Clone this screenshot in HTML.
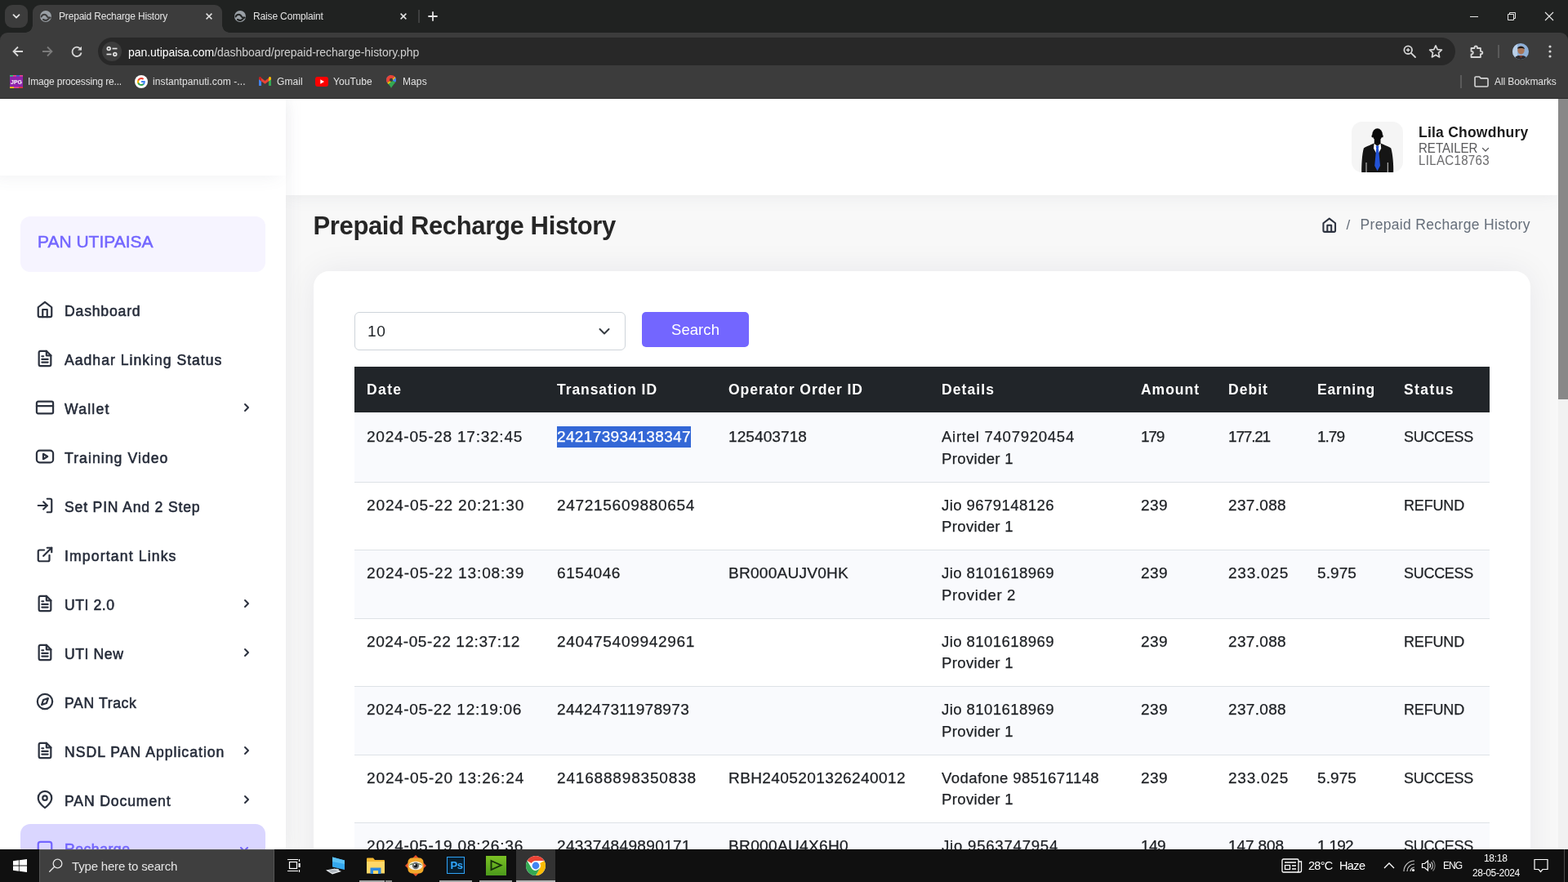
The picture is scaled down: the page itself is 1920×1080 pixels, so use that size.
<!DOCTYPE html>
<html lang="en">
<head>
<meta charset="utf-8">
<title>Prepaid Recharge History</title>
<style>
*{box-sizing:border-box;margin:0;padding:0}
html,body{width:1920px;height:1080px;overflow:hidden;background:#fff}
body{will-change:transform;font-family:"Liberation Sans",sans-serif;position:relative;color:#000}
.abs{position:absolute}
svg{display:block;overflow:visible}
.t{position:absolute;white-space:nowrap;line-height:1}

/* ---------- browser chrome ---------- */
#tabstrip{position:absolute;left:0;top:0;width:1920px;height:60px;background:#202221}
#toolbar{position:absolute;left:0;top:40px;width:1920px;height:81px;background:#3c3c3c;border-radius:9px 9px 0 0}
#tabsearch{position:absolute;left:6px;top:6px;width:28px;height:28px;border-radius:9px;background:#3c3c3c}
#tab1{position:absolute;left:40px;top:6px;width:232px;height:34px;background:#3c3c3c;border-radius:9px 9px 0 0}
#tab1:before,#tab1:after{content:"";position:absolute;bottom:0;width:9px;height:9px;background:radial-gradient(circle at 0 0,rgba(60,60,60,0) 8.5px,#3c3c3c 9px)}
#tab1:before{left:-9px}
#tab1:after{right:-9px;transform:scaleX(-1)}
.chrome-t{color:#e3e3e3;font-size:12px}
#omni{position:absolute;left:120px;top:46px;width:1662px;height:34px;border-radius:17px;background:#282828}
#siteinfo{position:absolute;left:125px;top:51px;width:24px;height:24px;border-radius:12px;background:#3c3c3c}
#pageline{position:absolute;left:0;top:120px;width:1920px;height:1px;background:#2a2a2a}

/* ---------- page ---------- */
#page{position:absolute;left:0;top:121px;width:1908px;height:919px;background:#f8f8f8;overflow:hidden}
#scroll{position:absolute;left:1908px;top:121px;width:12px;height:919px;background:#f1f1f1}
#thumb{position:absolute;left:0;top:0;width:12px;height:368px;background:#888}
#side{position:absolute;left:0;top:0;width:350px;height:919px;background:#fff;box-shadow:0 0 21px 0 rgba(89,102,122,.1)}
#logo{position:absolute;left:0;top:0;width:350px;height:94px;background:#fff;box-shadow:-9px 0 20px rgba(89,102,122,.1)}
#brand{position:absolute;left:25px;top:144px;width:300px;height:68px;border-radius:12px;background:#f6f4ff}
.mi{position:absolute;left:79px;font-size:17.6px;color:#252b39;-webkit-text-stroke-width:.55px}
.ic{position:absolute;left:44px;width:22px;height:22px;fill:none;stroke:#2c323f;stroke-width:2.4;stroke-linecap:round;stroke-linejoin:round}
.chev{position:absolute;left:293.5px;width:16px;height:16px;fill:none;stroke:#2c323f;stroke-width:3;stroke-linecap:round;stroke-linejoin:round}
#active{position:absolute;left:25px;top:888px;width:300px;height:60px;border-radius:12px;background:#dad6ff}
#head{position:absolute;left:350px;top:0;width:1558px;height:118px;background:#fff;box-shadow:0 0 20px rgba(89,102,122,.1)}
#avatar{position:absolute;left:1655px;top:28px;width:63px;height:62px;border-radius:13px;background:#f5f5f5;overflow:hidden}
#card{position:absolute;left:384px;top:211px;width:1490px;height:800px;border-radius:19px;background:#fff;box-shadow:0 0 40px rgba(8,21,66,.07)}
#sel{position:absolute;left:434px;top:261px;width:332px;height:47px;border:1px solid #ced4da;border-radius:6px;background:#fff}
#btn{position:absolute;left:786px;top:261px;width:131px;height:43px;border-radius:5px;background:#7366ff}
#thead{position:absolute;left:434px;top:328px;width:1390px;height:56px;background:#212529}
.th{position:absolute;top:348px;font-size:18.5px;font-weight:bold;color:#fff;letter-spacing:.9px;white-space:nowrap;line-height:1}
.row{position:absolute;left:434px;width:1390px;border-bottom:1px solid #dee2e6;background:#fff}
.row.odd{background:#f9fafd}
.c{position:absolute;transform:scaleX(1.06);transform-origin:0 50%;font-size:18px;color:#1c1f23;-webkit-text-stroke-width:.25px;letter-spacing:1.2px;white-space:nowrap;line-height:1}

/* ---------- taskbar ---------- */
#taskbar{position:absolute;left:0;top:1040px;width:1920px;height:40px;background:#101010}
#tsearch{position:absolute;left:48px;top:0;width:288px;height:40px;background:#3f3f3f;border:1px solid #555;border-bottom:0}
.tb-t{color:#fff;font-size:12px}
</style>
</head>
<body>

<!-- BROWSER CHROME -->
<div id="tabstrip"></div>
<div id="toolbar"></div>
<div id="tabsearch"></div>
<div id="tab1"></div>
<div id="omni"></div>
<div id="siteinfo"></div>
<!-- tab search chevron -->
<svg class="abs" style="left:14px;top:14px" width="12" height="12" viewBox="0 0 12 12"><path d="M2.5 4.2 6 7.7 9.5 4.2" fill="none" stroke="#e3e3e3" stroke-width="1.8" stroke-linecap="round" stroke-linejoin="round"/></svg>
<!-- tab 1 -->
<svg class="abs" style="left:48px;top:12px" width="16" height="16" viewBox="0 0 16 16"><circle cx="8" cy="8" r="7" fill="#9aa0a6"/><path d="M2.600 8.300c1.100-2.100 3-2.900 4.900-2.400 1.500.4 1.800 1.500 2.400 2.600.6 1 1.900 1.200 3.700 1.100M5 11.900c1.400 1 2.900 1.200 4.100.8 1.100-.4 1.800-1.100 2.500-1.700" fill="none" stroke="#3c3c3c" stroke-width="2.100" stroke-linecap="round"/></svg>
<div class="t chrome-t" style="left:72px;top:14px;letter-spacing:-.18px">Prepaid Recharge History</div>
<svg class="abs" style="left:250px;top:14px" width="12" height="12" viewBox="0 0 12 12"><path d="M2.600 2.600 9.400 9.400M9.400 2.600 2.600 9.400" stroke="#e3e3e3" stroke-width="1.500" stroke-linecap="butt"/></svg>
<!-- tab 2 -->
<svg class="abs" style="left:286px;top:12px" width="16" height="16" viewBox="0 0 16 16"><circle cx="8" cy="8" r="7" fill="#9aa0a6"/><path d="M2.600 8.300c1.100-2.100 3-2.900 4.900-2.400 1.500.4 1.800 1.500 2.400 2.600.6 1 1.900 1.200 3.700 1.100M5 11.900c1.400 1 2.900 1.200 4.100.8 1.100-.4 1.800-1.100 2.500-1.700" fill="none" stroke="#202221" stroke-width="2.100" stroke-linecap="round"/></svg>
<div class="t chrome-t" style="left:310px;top:14px;letter-spacing:-.15px">Raise Complaint</div>
<svg class="abs" style="left:488px;top:14px" width="12" height="12" viewBox="0 0 12 12"><path d="M2.600 2.600 9.400 9.400M9.400 2.600 2.600 9.400" stroke="#e3e3e3" stroke-width="1.500" stroke-linecap="butt"/></svg>
<div class="abs" style="left:512px;top:12px;width:2px;height:16px;background:#3e3f3f"></div>
<svg class="abs" style="left:524px;top:14px" width="12" height="12" viewBox="0 0 12 12"><path d="M6 1v10M1 6h10" stroke="#e3e3e3" stroke-width="1.800" stroke-linecap="round"/></svg>
<!-- window controls -->
<div class="abs" style="left:1800px;top:20px;width:10px;height:1px;background:#e8e8e8"></div>
<svg class="abs" style="left:1846px;top:15px" width="10" height="10" viewBox="0 0 10 10"><path d="M.5 2.500h7v7h-7zM2.500 2.500v-2h7v7h-2" fill="none" stroke="#e8e8e8" stroke-width="1"/></svg>
<svg class="abs" style="left:1892px;top:15px" width="10" height="10" viewBox="0 0 10 10"><path d="M0 0 10 10M10 0 0 10" stroke="#e8e8e8" stroke-width="1.1"/></svg>
<!-- nav buttons -->
<svg class="abs" style="left:14px;top:55px" width="16" height="16" viewBox="0 0 16 16"><path d="M14 8H2.800M8 2.500 2.500 8 8 13.500" fill="none" stroke="#d6d6d6" stroke-width="1.800" stroke-linejoin="miter"/></svg>
<svg class="abs" style="left:50px;top:55px" width="16" height="16" viewBox="0 0 16 16"><path d="M2 8h11.200M8 2.500 13.500 8 8 13.500" fill="none" stroke="#7b7b7b" stroke-width="1.800" stroke-linejoin="miter"/></svg>
<svg class="abs" style="left:86px;top:55px" width="16" height="16" viewBox="0 0 16 16"><path d="M13.300 6.200A5.600 5.600 0 1 0 13.600 9.500" fill="none" stroke="#d6d6d6" stroke-width="1.800"/><path d="M14 1.800v4.800H9.200z" fill="#d6d6d6"/></svg>
<!-- site info icon -->
<svg class="abs" style="left:129px;top:55px" width="16" height="16" viewBox="0 0 16 16"><g fill="none" stroke="#e3e3e3" stroke-width="1.700"><circle cx="4.200" cy="4.500" r="1.900"/><path d="M8.500 4.500h6"/><circle cx="11.800" cy="11.500" r="1.900"/><path d="M1.500 11.500h6"/></g></svg>
<div class="t" style="left:157px;top:56.600px;font-size:14px;color:#fff;letter-spacing:-.04px">pan.utipaisa.com<span style="color:#cfcfcf">/dashboard/prepaid-recharge-history.php</span></div>
<!-- zoom + star -->
<svg class="abs" style="left:1717px;top:54px" width="18" height="18" viewBox="0 0 18 18"><g fill="none" stroke="#d6d6d6" stroke-width="1.800"><circle cx="7.200" cy="7.200" r="4.800"/><path d="M10.800 10.800 16 16" stroke-linecap="round"/><path d="M5 7.200h4.400M7.200 5v4.400" stroke-width="1.400"/></g></svg>
<svg class="abs" style="left:1749px;top:54px" width="18" height="18" viewBox="0 0 18 18"><path d="M9 1.800 11.200 6.600 16.400 7.200 12.500 10.700 13.600 15.900 9 13.200 4.400 15.900 5.500 10.700 1.600 7.200 6.800 6.600z" fill="none" stroke="#d6d6d6" stroke-width="1.700" stroke-linejoin="round"/></svg>
<!-- extensions -->
<svg class="abs" style="left:1799px;top:54px" width="18" height="18" viewBox="0 0 18 18"><path d="M2.500 5h4v-.8a1.700 1.700 0 0 1 3.400 0V5h4v3.800h.7a1.700 1.700 0 0 1 0 3.400h-.7V16h-11.400v-3.600h.5a1.800 1.800 0 0 0 0-3.600h-.5z" fill="none" stroke="#d6d6d6" stroke-width="1.800" stroke-linejoin="round"/></svg>
<div class="abs" style="left:1834px;top:55px;width:2px;height:16px;background:#5a5a5a"></div>
<!-- profile avatar -->
<div class="abs" style="left:1852px;top:53px;width:20px;height:20px;border-radius:10px;overflow:hidden"><svg width="20" height="20" viewBox="0 0 20 20"><rect width="20" height="20" fill="#8fb0d8"/><rect x="0" y="0" width="6" height="20" fill="#b9cfe8"/><ellipse cx="10.500" cy="8.500" rx="4.200" ry="5" fill="#a9775a"/><path d="M6 6.500c.5-3.500 8-4 9 .5-1.500-1.200-6-1.500-9-.5z" fill="#1c1a1a"/><path d="M2 20c.5-4 4-5.500 8-5 4-.5 7.500 1 8.500 5z" fill="#2a2a2e"/><path d="M8 15l2.500 3 2.500-3" fill="#7a3b2a"/></svg></div>
<svg class="abs" style="left:1895px;top:54px" width="6" height="18" viewBox="0 0 6 18"><g fill="#d6d6d6"><circle cx="3" cy="3" r="1.600"/><circle cx="3" cy="9" r="1.600"/><circle cx="3" cy="15" r="1.600"/></g></svg>
<!-- bookmarks -->
<svg class="abs" style="left:12px;top:92px" width="16" height="16" viewBox="0 0 16 16"><rect width="16" height="16" rx="1" fill="#8e24aa"/><rect width="4" height="1.600" fill="#2ecc71"/><rect x="4" width="4" height="1.600" fill="#e84393"/><rect x="8" width="4" height="1.600" fill="#3b5bdb"/><rect x="12" width="4" height="1.600" fill="#e84393"/><rect y="14.400" width="5" height="1.600" fill="#ffd600"/><rect x="5" y="14.400" width="6" height="1.600" fill="#e84393"/><rect x="11" y="14.400" width="5" height="1.600" fill="#e53935"/><text x="8" y="11" font-family="Liberation Sans,sans-serif" font-size="7.500" font-weight="bold" fill="#fff" text-anchor="middle" textLength="14" lengthAdjust="spacingAndGlyphs">JPG</text></svg>
<div class="t chrome-t" style="left:34px;top:94px;letter-spacing:-.17px">Image processing re...</div>
<svg class="abs" style="left:165px;top:92px" width="16" height="16" viewBox="0 0 16 16"><circle cx="8" cy="8" r="8" fill="#fff"/><path d="M12.800 8.100c0-.4 0-.7-.1-1H8v2h2.700c-.1.600-.5 1.200-1 1.500v1.300h1.600c1-.9 1.500-2.200 1.500-3.800z" fill="#4285f4"/><path d="M8 13c1.400 0 2.500-.4 3.300-1.200l-1.600-1.300c-.4.300-1 .5-1.700.5-1.300 0-2.400-.9-2.800-2.100H3.500v1.300C4.300 11.900 6 13 8 13z" fill="#34a853"/><path d="M5.200 8.900c-.2-.6-.2-1.200 0-1.800V5.800H3.500c-.7 1.400-.7 3 0 4.400z" fill="#fbbc05"/><path d="M8 5c.7 0 1.400.3 1.900.7l1.400-1.400C10.500 3.500 9.300 3 8 3 6 3 4.300 4.100 3.500 5.800l1.700 1.300C5.600 5.900 6.700 5 8 5z" fill="#ea4335"/></svg>
<div class="t chrome-t" style="left:187px;top:94px;letter-spacing:.1px">instantpanuti.com -...</div>
<svg class="abs" style="left:317px;top:94px" width="15" height="12" viewBox="0 0 15 12"><path d="M0 1.500v9.500h3V5.500z" fill="#4285f4"/><path d="M12 5.500V11h3V1.500z" fill="#34a853"/><path d="M0 1.500 3 5.500 7.500 8.800 12 5.500 15 1.500 13.600.3 7.500 4.900 1.400.3z" fill="#ea4335"/><path d="M12 1.500v4l3-2.200V1.500c0-1.300-1.500-2-2.500-1.200z" fill="#fbbc05"/><path d="M3 1.500v4L0 3.300V1.500C0 .2 1.500-.5 2.500.3z" fill="#c5221f"/></svg>
<div class="t chrome-t" style="left:339px;top:94px;letter-spacing:.1px">Gmail</div>
<svg class="abs" style="left:386px;top:94px" width="16" height="12" viewBox="0 0 16 12"><rect width="16" height="12" rx="3" fill="#ff0000"/><path d="M6.300 3.300v5.400L11 6z" fill="#fff"/></svg>
<div class="t chrome-t" style="left:408px;top:94px;letter-spacing:.1px">YouTube</div>
<svg class="abs" style="left:473px;top:92px" width="12" height="16" viewBox="0 0 12 16"><path d="M6 0C2.700 0 0 2.600 0 5.900c0 1.400.5 2.600 1.300 3.700z" fill="#1a73e8"/><path d="M6 0c1.800 0 3.500.8 4.600 2.100L1.300 9.600C.5 8.500 0 7.300 0 5.900 0 2.600 2.700 0 6 0z" fill="#ea4335"/><path d="M10.600 2.100C11.500 3.100 12 4.500 12 5.900c0 1-.3 2-.7 2.900L6 5.900z" fill="#4285f4"/><path d="M1.300 9.600C2.800 11.500 5 13.500 6 16c.8-2.300 3.500-4.700 5.300-7.200L6 5.900z" fill="#34a853"/><path d="M1.300 9.600 6 5.900 10.600 2.100 6 5.900z" fill="#fbbc04"/><path d="M1.300 9.600l9.300-7.500.7 1.200-8.800 7.800z" fill="#fbbc04"/><circle cx="6" cy="5.900" r="2.100" fill="#3c3c3c"/></svg>
<div class="t chrome-t" style="left:493px;top:94px;letter-spacing:.1px">Maps</div>
<div class="abs" style="left:1788px;top:92px;width:2px;height:16px;background:#5a5a5a"></div>
<svg class="abs" style="left:1805px;top:93px" width="18" height="14" viewBox="0 0 18 14"><path d="M1 2.200a1.200 1.200 0 0 1 1.200-1.200h4.300l1.800 1.900h7.500a1.200 1.200 0 0 1 1.200 1.200v7.700a1.200 1.200 0 0 1-1.200 1.200H2.200a1.200 1.200 0 0 1-1.200-1.200z" fill="none" stroke="#d6d6d6" stroke-width="1.600"/></svg>
<div class="t chrome-t" style="left:1830px;top:94px;letter-spacing:-.08px">All Bookmarks</div>


<!-- PAGE -->
<div id="page">
<div id="head"></div>
<div id="avatar"><svg width="63" height="62" viewBox="0 0 63 62"><ellipse cx="31.600" cy="15.600" rx="6.300" ry="7.300" fill="#0b0b0b"/><ellipse cx="25.400" cy="17.800" rx=".9" ry="1.700" fill="#0b0b0b"/><ellipse cx="37.800" cy="17.800" rx=".9" ry="1.700" fill="#0b0b0b"/><path d="M27.800 20h7.700v8h-7.700z" fill="#0b0b0b"/><path d="M12.200 62c0-9 .5-22 2.700-29.500 1-1.500 8.500-4 12.500-6h8.400c4 2 11.500 4.500 12.500 6 2.200 7.500 3.200 20.500 2.900 29.500z" fill="#151515"/><path d="M27.600 26.800l4 3.200 4-3.200.6 6-4.600 8.500-4.600-8.500z" fill="#fff"/><path d="M29.600 29.400h4l-.6 3 2 21.600-3.400 6.200-3.400-6.200 2-21.600z" fill="#2353d6"/><path d="M18 50v12M44.300 50v12" stroke="#e9e9e9" stroke-width=".9"/></svg></div>
<div class="t" style="left:1737px;top:32.700px;font-size:17.5px;font-weight:bold;color:#1b1b1b;letter-spacing:0.23px">Lila Chowdhury</div>
<div class="t" style="left:1737px;top:51.900px;font-size:16.4px;color:#59595b;transform:scaleX(.92);transform-origin:0 50%;letter-spacing:-0.02px">RETAILER</div>
<svg class="abs" style="left:1813.500px;top:57.500px" width="10" height="8" viewBox="0 0 10 8"><path d="M1.500 2.500 5 6l3.500-3.500" fill="none" stroke="#59595b" stroke-width="1.200" stroke-linecap="round" stroke-linejoin="round"/></svg>
<div class="t" style="left:1737px;top:66.900px;font-size:16.4px;color:#6a6a6c;transform:scaleX(.92);transform-origin:0 50%;letter-spacing:0.34px">LILAC18763</div>
<div class="t" style="left:383.500px;top:139.800px;font-size:31px;font-weight:bold;color:#262626;letter-spacing:-0.36px">Prepaid Recharge History</div>
<svg class="abs" style="left:1618.300px;top:145.200px;fill:none;stroke:#2c323f;stroke-width:2.500;stroke-linecap:round;stroke-linejoin:round" width="19.500" height="19.500" viewBox="0 0 24 24"><path d="M3 9l9-7 9 7v11a2 2 0 0 1-2 2H5a2 2 0 0 1-2-2z"/><path d="M9 22V12h6v10"/></svg>
<div class="t" style="left:1648.500px;top:145.500px;font-size:17px;color:#656e7a">/</div>
<div class="t" style="left:1665.500px;top:145.800px;font-size:17.5px;color:#656e7a;letter-spacing:0.33px">Prepaid Recharge History</div>

<div id="card"></div>
<div id="sel"></div>
<div class="t" style="left:450px;top:275.2px;font-size:19.2px;color:#212529;letter-spacing:.5px">10</div>
<svg class="abs" style="left:732px;top:278.5px" width="16" height="12" viewBox="0 0 16 12"><path d="M2.500 3 8 8.500 13.500 3" fill="none" stroke="#343a40" stroke-width="2" stroke-linecap="round" stroke-linejoin="round"/></svg>
<div id="btn"></div>
<div class="t" style="left:822px;top:274px;font-size:18.5px;color:#fff;letter-spacing:0.06px">Search</div>
<div id="thead"></div>
<div class="th" style="left:449px;font-size:17.5px;letter-spacing:1.39px">Date</div>
<div class="th" style="left:682px;font-size:17.5px;letter-spacing:0.93px">Transation ID</div>
<div class="th" style="left:892px;font-size:17.5px;letter-spacing:0.95px">Operator Order ID</div>
<div class="th" style="left:1153px;font-size:17.5px;letter-spacing:1.09px">Details</div>
<div class="th" style="left:1397px;font-size:17.5px;letter-spacing:0.98px">Amount</div>
<div class="th" style="left:1504px;font-size:17.5px;letter-spacing:1.05px">Debit</div>
<div class="th" style="left:1613px;font-size:17.5px;letter-spacing:0.84px">Earning</div>
<div class="th" style="left:1719px;font-size:17.5px;letter-spacing:1.42px">Status</div>
<div class="row odd" style="top:384px;height:86px"></div>
<div class="c" style="left:449px;top:405.0px;letter-spacing:0.69px">2024-05-28 17:32:45</div>
<div class="abs" style="left:682px;top:401px;width:164px;height:26px;background:#3367d6"></div>
<div class="c" style="left:682px;top:405.0px;letter-spacing:0.3px;color:#fff">242173934138347</div>
<div class="c" style="left:892px;top:405.0px;letter-spacing:0.05px">125403718</div>
<div class="c" style="left:1153px;top:405.0px;letter-spacing:0.71px;transform:scaleX(1.03)">Airtel 7407920454</div>
<div class="c" style="left:1153px;top:432.0px;letter-spacing:0.34px;transform:scaleX(1.03)">Provider 1</div>
<div class="c" style="left:1397px;top:405.0px;letter-spacing:-1.21px">179</div>
<div class="c" style="left:1504px;top:405.0px;letter-spacing:-1.16px">177.21</div>
<div class="c" style="left:1613px;top:405.0px;letter-spacing:-0.98px">1.79</div>
<div class="c" style="left:1719px;top:405.0px;letter-spacing:-0.29px;transform:none">SUCCESS</div>
<div class="row" style="top:470px;height:83px"></div>
<div class="c" style="left:449px;top:489.0px;letter-spacing:0.79px">2024-05-22 20:21:30</div>
<div class="c" style="left:682px;top:489.0px;letter-spacing:0.62px">247215609880654</div>
<div class="c" style="left:1153px;top:489.0px;letter-spacing:0.42px;transform:scaleX(1.03)">Jio 9679148126</div>
<div class="c" style="left:1153px;top:515.0px;letter-spacing:0.34px;transform:scaleX(1.03)">Provider 1</div>
<div class="c" style="left:1397px;top:489.0px;letter-spacing:0.37px">239</div>
<div class="c" style="left:1504px;top:489.0px;letter-spacing:0.27px">237.088</div>
<div class="c" style="left:1719px;top:489.0px;letter-spacing:-0.17px;transform:none">REFUND</div>
<div class="row odd" style="top:553px;height:84px"></div>
<div class="c" style="left:449px;top:572.0px;letter-spacing:0.79px">2024-05-22 13:08:39</div>
<div class="c" style="left:682px;top:572.0px;letter-spacing:0.5px">6154046</div>
<div class="c" style="left:892px;top:572.0px;letter-spacing:0.22px">BR000AUJV0HK</div>
<div class="c" style="left:1153px;top:572.0px;letter-spacing:0.42px;transform:scaleX(1.03)">Jio 8101618969</div>
<div class="c" style="left:1153px;top:599.0px;letter-spacing:0.63px;transform:scaleX(1.03)">Provider 2</div>
<div class="c" style="left:1397px;top:572.0px;letter-spacing:0.37px">239</div>
<div class="c" style="left:1504px;top:572.0px;letter-spacing:0.68px">233.025</div>
<div class="c" style="left:1613px;top:572.0px;letter-spacing:0.05px">5.975</div>
<div class="c" style="left:1719px;top:572.0px;letter-spacing:-0.29px;transform:none">SUCCESS</div>
<div class="row" style="top:637px;height:83px"></div>
<div class="c" style="left:449px;top:656.0px;letter-spacing:0.54px">2024-05-22 12:37:12</div>
<div class="c" style="left:682px;top:656.0px;letter-spacing:0.62px">240475409942961</div>
<div class="c" style="left:1153px;top:656.0px;letter-spacing:0.42px;transform:scaleX(1.03)">Jio 8101618969</div>
<div class="c" style="left:1153px;top:682.0px;letter-spacing:0.34px;transform:scaleX(1.03)">Provider 1</div>
<div class="c" style="left:1397px;top:656.0px;letter-spacing:0.37px">239</div>
<div class="c" style="left:1504px;top:656.0px;letter-spacing:0.27px">237.088</div>
<div class="c" style="left:1719px;top:656.0px;letter-spacing:-0.17px;transform:none">REFUND</div>
<div class="row odd" style="top:720px;height:84px"></div>
<div class="c" style="left:449px;top:739.0px;letter-spacing:0.64px">2024-05-22 12:19:06</div>
<div class="c" style="left:682px;top:739.0px;letter-spacing:0.27px">244247311978973</div>
<div class="c" style="left:1153px;top:739.0px;letter-spacing:0.42px;transform:scaleX(1.03)">Jio 8101618969</div>
<div class="c" style="left:1153px;top:766.0px;letter-spacing:0.34px;transform:scaleX(1.03)">Provider 1</div>
<div class="c" style="left:1397px;top:739.0px;letter-spacing:0.37px">239</div>
<div class="c" style="left:1504px;top:739.0px;letter-spacing:0.27px">237.088</div>
<div class="c" style="left:1719px;top:739.0px;letter-spacing:-0.17px;transform:none">REFUND</div>
<div class="row" style="top:804px;height:83px"></div>
<div class="c" style="left:449px;top:823.0px;letter-spacing:0.79px">2024-05-20 13:26:24</div>
<div class="c" style="left:682px;top:823.0px;letter-spacing:0.74px">241688898350838</div>
<div class="c" style="left:892px;top:823.0px;letter-spacing:0.34px">RBH2405201326240012</div>
<div class="c" style="left:1153px;top:823.0px;letter-spacing:0.4px;transform:scaleX(1.03)">Vodafone 9851671148</div>
<div class="c" style="left:1153px;top:849.0px;letter-spacing:0.34px;transform:scaleX(1.03)">Provider 1</div>
<div class="c" style="left:1397px;top:823.0px;letter-spacing:0.37px">239</div>
<div class="c" style="left:1504px;top:823.0px;letter-spacing:0.68px">233.025</div>
<div class="c" style="left:1613px;top:823.0px;letter-spacing:0.05px">5.975</div>
<div class="c" style="left:1719px;top:823.0px;letter-spacing:-0.29px;transform:none">SUCCESS</div>
<div class="row odd" style="top:887px;height:84px"></div>
<div class="c" style="left:449px;top:906.0px;letter-spacing:0.74px">2024-05-19 08:26:36</div>
<div class="c" style="left:682px;top:906.0px;letter-spacing:0.3px">243374849890171</div>
<div class="c" style="left:892px;top:906.0px;letter-spacing:0.3px">BR000AU4X6H0</div>
<div class="c" style="left:1153px;top:906.0px;letter-spacing:0.77px;transform:scaleX(1.03)">Jio 9563747954</div>
<div class="c" style="left:1153px;top:933.0px;letter-spacing:0.34px;transform:scaleX(1.03)">Provider 1</div>
<div class="c" style="left:1397px;top:906.0px;letter-spacing:-0.58px">149</div>
<div class="c" style="left:1504px;top:906.0px;letter-spacing:-0.13px">147.808</div>
<div class="c" style="left:1613px;top:906.0px;letter-spacing:-0.71px">1.192</div>
<div class="c" style="left:1719px;top:906.0px;letter-spacing:-0.29px;transform:none">SUCCESS</div>

<div id="side"></div>
<div id="logo"></div>
<div id="brand"></div>
<div class="t" style="left:46px;top:164px;font-size:21px;color:#7366ff;letter-spacing:-0.01px;-webkit-text-stroke-width:.5px">PAN UTIPAISA</div>
<svg class="ic" style="top:247px" viewBox="0 0 24 24"><path d="M3 9l9-7 9 7v11a2 2 0 0 1-2 2H5a2 2 0 0 1-2-2z"/><path d="M9 22V12h6v10"/></svg>
<div class="t mi" style="top:252px;letter-spacing:0.82px">Dashboard</div>
<svg class="ic" style="top:307px" viewBox="0 0 24 24"><path d="M14 2H6a2 2 0 0 0-2 2v16a2 2 0 0 0 2 2h12a2 2 0 0 0 2-2V8z"/><path d="M14 2v6h6"/><path d="M16 13H8"/><path d="M16 17H8"/><path d="M10 9H8"/></svg>
<div class="t mi" style="top:312px;letter-spacing:1.01px">Aadhar Linking Status</div>
<svg class="ic" style="top:367px" viewBox="0 0 24 24"><rect x="1" y="4" width="22" height="16" rx="2" ry="2"/><path d="M1 10h22"/></svg>
<div class="t mi" style="top:372px;letter-spacing:1.21px">Wallet</div>
<svg class="chev" style="top:369.5px" viewBox="0 0 24 24"><path d="M9 18l6-6-6-6"/></svg>
<svg class="ic" style="top:427px" viewBox="0 0 24 24"><rect x="1" y="4" width="22" height="16" rx="4" ry="4"/><path d="M9.800 8.500v7l5.700-3.500z"/></svg>
<div class="t mi" style="top:432px;letter-spacing:1.07px">Training Video</div>
<svg class="ic" style="top:487px" viewBox="0 0 24 24"><path d="M15 3h4a2 2 0 0 1 2 2v14a2 2 0 0 1-2 2h-4"/><path d="M10 17l5-5-5-5"/><path d="M15 12H3"/></svg>
<div class="t mi" style="top:492px;letter-spacing:0.82px">Set PIN And 2 Step</div>
<svg class="ic" style="top:547px" viewBox="0 0 24 24"><path d="M18 13v6a2 2 0 0 1-2 2H5a2 2 0 0 1-2-2V8a2 2 0 0 1 2-2h6"/><path d="M15 3h6v6"/><path d="M10 14L21 3"/></svg>
<div class="t mi" style="top:552px;letter-spacing:1.15px">Important Links</div>
<svg class="ic" style="top:607px" viewBox="0 0 24 24"><path d="M14 2H6a2 2 0 0 0-2 2v16a2 2 0 0 0 2 2h12a2 2 0 0 0 2-2V8z"/><path d="M14 2v6h6"/><path d="M16 13H8"/><path d="M16 17H8"/><path d="M10 9H8"/></svg>
<div class="t mi" style="top:612px;letter-spacing:0.54px">UTI 2.0</div>
<svg class="chev" style="top:609.5px" viewBox="0 0 24 24"><path d="M9 18l6-6-6-6"/></svg>
<svg class="ic" style="top:667px" viewBox="0 0 24 24"><path d="M14 2H6a2 2 0 0 0-2 2v16a2 2 0 0 0 2 2h12a2 2 0 0 0 2-2V8z"/><path d="M14 2v6h6"/><path d="M16 13H8"/><path d="M16 17H8"/><path d="M10 9H8"/></svg>
<div class="t mi" style="top:672px;letter-spacing:0.58px">UTI New</div>
<svg class="chev" style="top:669.5px" viewBox="0 0 24 24"><path d="M9 18l6-6-6-6"/></svg>
<svg class="ic" style="top:727px" viewBox="0 0 24 24"><circle cx="12" cy="12" r="10"/><path d="M16.240 7.760l-2.120 6.360-6.360 2.120 2.120-6.360z"/></svg>
<div class="t mi" style="top:732px;letter-spacing:0.63px">PAN Track</div>
<svg class="ic" style="top:787px" viewBox="0 0 24 24"><path d="M14 2H6a2 2 0 0 0-2 2v16a2 2 0 0 0 2 2h12a2 2 0 0 0 2-2V8z"/><path d="M14 2v6h6"/><path d="M16 13H8"/><path d="M16 17H8"/><path d="M10 9H8"/></svg>
<div class="t mi" style="top:792px;letter-spacing:1.02px">NSDL PAN Application</div>
<svg class="chev" style="top:789.5px" viewBox="0 0 24 24"><path d="M9 18l6-6-6-6"/></svg>
<svg class="ic" style="top:847px" viewBox="0 0 24 24"><path d="M21 10c0 7-9 13-9 13s-9-6-9-13a9 9 0 0 1 18 0z"/><circle cx="12" cy="10" r="3"/></svg>
<div class="t mi" style="top:852px;letter-spacing:0.88px">PAN Document</div>
<svg class="chev" style="top:849.5px" viewBox="0 0 24 24"><path d="M9 18l6-6-6-6"/></svg>
<div id="active"></div>
<svg class="ic" style="top:908px;stroke:#7366ff" viewBox="0 0 24 24"><rect x="3" y="2" width="18" height="20" rx="3"/></svg>
<div class="t mi" style="top:911px;color:#7366ff;letter-spacing:0.52px">Recharge</div>
<svg class="chev" style="top:911px;left:291px;stroke:#7366ff" viewBox="0 0 24 24"><path d="M6 9l6 6 6-6"/></svg>

</div>
<div id="scroll"><div id="thumb"></div></div>
<div id="pageline"></div>

<!-- TASKBAR -->
<div id="taskbar">
<div id="tsearch"></div>
<!-- start -->
<svg class="abs" style="left:15.500px;top:12px" width="17" height="16" viewBox="0 0 17 16"><path d="M0 2.300 6.900 1.300V7.600H0zM7.700 1.200 17 0V7.600H7.700zM0 8.400H6.900V14.700L0 13.700zM7.700 8.400H17V16L7.700 14.800z" fill="#fff"/></svg>
<!-- search -->
<svg class="abs" style="left:60px;top:11px" width="17" height="17" viewBox="0 0 17 17"><circle cx="10.500" cy="6.500" r="5.300" fill="none" stroke="#e6e6e6" stroke-width="1.300"/><path d="M6.700 10.300.700 16.300" stroke="#e6e6e6" stroke-width="1.300" stroke-linecap="round"/></svg>
<div class="t" style="left:88px;top:13px;font-size:15px;color:#e4e4e4;letter-spacing:-.18px">Type here to search</div>
<!-- task view -->
<svg class="abs" style="left:351px;top:11px" width="18" height="18" viewBox="0 0 18 18"><g fill="none" stroke="#fff" stroke-width="1.200"><rect x="3.500" y="4.500" width="9" height="8"/><path d="M1 1.500h13M1 15.500h13M15.500 1v3M15.500 14v3"/></g><rect x="14.500" y="6" width="2.200" height="5" fill="#fff"/></svg>
<!-- this pc -->
<svg class="abs" style="left:398px;top:8px" width="26" height="24" viewBox="0 0 26 24"><path d="M9 1.500 24 5.500V17L9 13.500z" fill="#35a8ee"/><path d="M9 1.500 24 5.500V10L9 7z" fill="#5cc2f7"/><path d="M14 15.500l3 .800-.500 2.500-3.500-.700z" fill="#b9c0c7"/><path d="M1 17.500 12 15.500 20 19 9 22.500z" fill="#e9edf0"/><path d="M3.500 17.800 11.500 16.500 16.500 18.800 8.800 21z" fill="#aeb6bd"/></svg>
<!-- explorer -->
<svg class="abs" style="left:448px;top:9px" width="24" height="22" viewBox="0 0 24 22"><path d="M1 2.500a1 1 0 0 1 1-1h7l2 2.500h11a1 1 0 0 1 1 1V20H1z" fill="#f4b730"/><path d="M1 6h22v14.500H1z" fill="#ffd867"/><path d="M5.500 13.500h13V21h-13z" fill="#2d8ae0"/><path d="M9 17h6v4H9z" fill="#ffd867"/></svg>
<!-- faststone -->
<svg class="abs" style="left:496px;top:7px" width="26" height="26" viewBox="0 0 26 26"><path d="M13 0 26 13 13 26 0 13z" fill="#e8502a"/><rect x="3.500" y="3.500" width="19" height="19" rx="5" fill="#f2a92c"/><ellipse cx="13" cy="13" rx="8.500" ry="5.200" fill="#f5f1e6"/><path d="M4.500 13c2-4.500 15-4.500 17 0-3-2.500-14-2.500-17 0z" fill="#5b7d3a"/><circle cx="13" cy="13" r="4.200" fill="#6b6f73"/><circle cx="13" cy="13" r="2.200" fill="#15181b"/><circle cx="11.800" cy="11.800" r="1" fill="#fff"/></svg>
<!-- photoshop -->
<div class="abs" style="left:547px;top:9px;width:22px;height:21px;background:#061e30;border:1.500px solid #2fa3f7"></div>
<div class="t" style="left:551.500px;top:13px;font-size:13px;font-weight:bold;color:#31a8ff;letter-spacing:-.3px">Ps</div>
<!-- camtasia-like -->
<div class="abs" style="left:595px;top:8px;width:25px;height:24px;background:linear-gradient(#7cc124,#4c9a1c)"><svg width="25" height="24" viewBox="0 0 25 24"><path d="M6.500 6 18.500 11.500 6.500 17z" fill="none" stroke="#16300a" stroke-width="1.900" stroke-linejoin="miter"/></svg></div>
<!-- chrome active -->
<div class="abs" style="left:632px;top:0;width:48px;height:40px;background:#333333"></div>
<svg class="abs" style="left:644px;top:8px" width="24" height="24" viewBox="0 0 24 24"><circle cx="12" cy="12" r="12" fill="#fff"/><path d="M12 0a12 12 0 0 1 10.400 6H12a6 6 0 0 0-5.200 3L1.600 6A12 12 0 0 1 12 0z" fill="#ea4335"/><path d="M22.400 6A12 12 0 0 1 12 24l5.200-9a6 6 0 0 0 0-6z" fill="#fbbc04"/><path d="M1.600 6 6.800 15a6 6 0 0 0 5.200 3l-0 0 5.200-3L12 24A12 12 0 0 1 1.600 6z" fill="#34a853"/><circle cx="12" cy="12" r="5.500" fill="#fff"/><circle cx="12" cy="12" r="4.400" fill="#4285f4"/></svg>
<!-- running indicators -->
<div class="abs" style="left:440px;top:38px;width:31px;height:2px;background:#a5a5a5"></div>
<div class="abs" style="left:472px;top:38px;width:8px;height:2px;background:#8a8a8a"></div>
<div class="abs" style="left:538px;top:38px;width:40px;height:2px;background:#a5a5a5"></div>
<div class="abs" style="left:587px;top:38px;width:40px;height:2px;background:#a5a5a5"></div>
<div class="abs" style="left:632px;top:38px;width:48px;height:2px;background:#b5b5b5"></div>
<!-- tray -->
<svg class="abs" style="left:1569px;top:11px" width="26" height="18" viewBox="0 0 26 18"><g fill="none" stroke="#fff" stroke-width="1.300"><path d="M1 2.500a1.500 1.500 0 0 1 1.500-1.500h17a1.500 1.500 0 0 1 1.500 1.500v13a1.500 1.500 0 0 1-1.500 1.500h-17a1.500 1.500 0 0 1-1.500-1.500z"/><path d="M21 4h3.500v11a2 2 0 0 1-2 2h-3"/><path d="M4 5h14M13 9h5M13 13h5"/><rect x="4.500" y="8.500" width="6" height="5"/></g></svg>
<div class="t" style="left:1602px;top:12.500px;font-size:14.5px;color:#fff;letter-spacing:-.75px">28°C</div>
<div class="t" style="left:1640px;top:12.500px;font-size:14.5px;color:#fff;letter-spacing:-.6px">Haze</div>
<svg class="abs" style="left:1694px;top:15px" width="14" height="9" viewBox="0 0 14 9"><path d="M1 8 7 2l6 6" fill="none" stroke="#fff" stroke-width="1.300"/></svg>
<svg class="abs" style="left:1718px;top:12px" width="16" height="16" viewBox="0 0 16 16"><g fill="none" stroke="#c8c8c8" stroke-width="1.200"><path d="M1 15A13 13 0 0 1 14 2"/><path d="M5 15a9 9 0 0 1 9-9"/><path d="M9 15a5 5 0 0 1 5-5"/></g><circle cx="12.500" cy="13.500" r="1.600" fill="#fff"/></svg>
<svg class="abs" style="left:1740px;top:11px" width="18" height="18" viewBox="0 0 18 18"><g fill="none" stroke="#fff" stroke-width="1.200"><path d="M1.500 6.500h3l4-3.500v12l-4-3.500h-3z"/><path d="M10.500 6.500a3.500 3.500 0 0 1 0 5"/><path d="M12.500 4.500a6.500 6.500 0 0 1 0 9" stroke="#bdbdbd"/><path d="M14.500 2.500a9.500 9.500 0 0 1 0 13" stroke="#7a7a7a"/></g></svg>
<div class="t tb-t" style="left:1767px;top:14px;letter-spacing:-.9px">ENG</div>
<div class="t tb-t" style="left:1817px;top:5px;letter-spacing:-.3px">18:18</div>
<div class="t tb-t" style="left:1803px;top:23px;letter-spacing:-.35px">28-05-2024</div>
<svg class="abs" style="left:1878px;top:11px" width="18" height="18" viewBox="0 0 18 18"><path d="M1 1.500h16v12h-6l-2.500 3-2.500-3H1z" fill="none" stroke="#fff" stroke-width="1.200"/></svg>
<div class="abs" style="left:1915px;top:0;width:1px;height:40px;background:#4a4a4a"></div>

</div>

</body>
</html>
